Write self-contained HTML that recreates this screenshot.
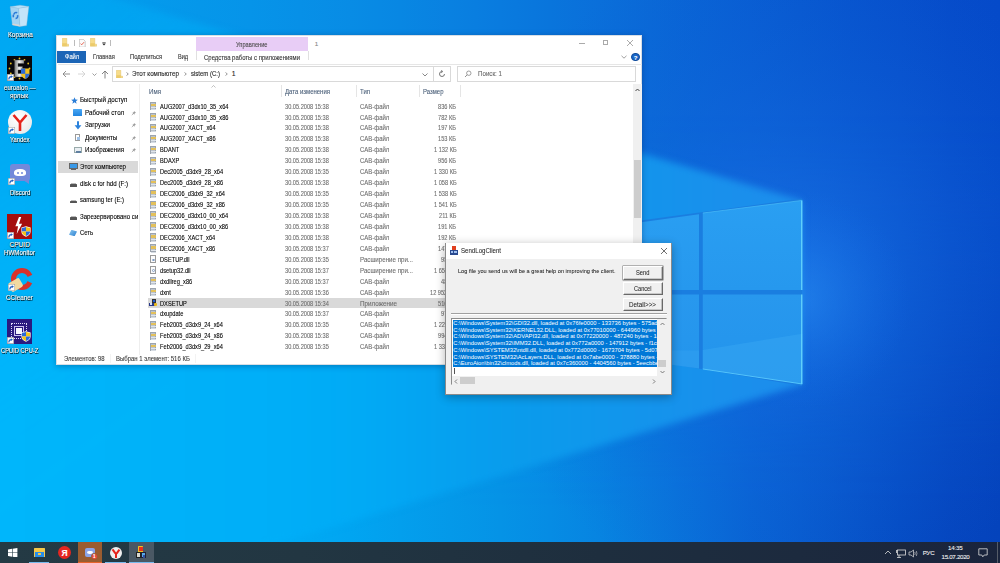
<!DOCTYPE html>
<html><head><meta charset="utf-8"><style>
*{margin:0;padding:0;box-sizing:border-box}
html,body{width:1000px;height:563px;overflow:hidden;position:relative;font-family:"Liberation Sans",sans-serif;background:#0a70d8}
.a{position:absolute;white-space:nowrap}
.ic{position:absolute}
.t{position:absolute;white-space:nowrap;line-height:1;-webkit-text-stroke:0.1px}
.dl{text-shadow:0 0 1px #000,0 0.5px 1px #000}
</style></head><body>

<svg class="a" style="left:0;top:0" width="1000" height="563" viewBox="0 0 1000 563">
<defs>
<linearGradient id="topg" x1="0" y1="0" x2="1000" y2="0" gradientUnits="userSpaceOnUse"><stop offset="0.000" stop-color="rgb(1,162,239)"/><stop offset="0.050" stop-color="rgb(1,160,238)"/><stop offset="0.100" stop-color="rgb(2,157,237)"/><stop offset="0.150" stop-color="rgb(4,154,236)"/><stop offset="0.200" stop-color="rgb(5,151,234)"/><stop offset="0.250" stop-color="rgb(6,148,233)"/><stop offset="0.300" stop-color="rgb(7,144,231)"/><stop offset="0.350" stop-color="rgb(8,140,229)"/><stop offset="0.400" stop-color="rgb(8,135,227)"/><stop offset="0.450" stop-color="rgb(9,129,225)"/><stop offset="0.500" stop-color="rgb(9,123,223)"/><stop offset="0.550" stop-color="rgb(9,117,220)"/><stop offset="0.600" stop-color="rgb(10,111,218)"/><stop offset="0.650" stop-color="rgb(10,105,215)"/><stop offset="0.700" stop-color="rgb(9,99,213)"/><stop offset="0.750" stop-color="rgb(9,94,211)"/><stop offset="0.800" stop-color="rgb(8,89,208)"/><stop offset="0.850" stop-color="rgb(7,84,206)"/><stop offset="0.900" stop-color="rgb(7,80,204)"/><stop offset="0.950" stop-color="rgb(6,76,202)"/><stop offset="1.000" stop-color="rgb(5,74,201)"/></linearGradient>
<linearGradient id="botg" x1="0" y1="0" x2="1000" y2="0" gradientUnits="userSpaceOnUse"><stop offset="0.000" stop-color="rgb(0,179,250)"/><stop offset="0.050" stop-color="rgb(0,179,249)"/><stop offset="0.100" stop-color="rgb(0,177,249)"/><stop offset="0.150" stop-color="rgb(0,176,248)"/><stop offset="0.200" stop-color="rgb(0,175,247)"/><stop offset="0.250" stop-color="rgb(0,173,246)"/><stop offset="0.300" stop-color="rgb(1,170,244)"/><stop offset="0.350" stop-color="rgb(1,165,241)"/><stop offset="0.400" stop-color="rgb(3,159,237)"/><stop offset="0.450" stop-color="rgb(4,153,233)"/><stop offset="0.500" stop-color="rgb(5,147,230)"/><stop offset="0.550" stop-color="rgb(6,140,228)"/><stop offset="0.600" stop-color="rgb(7,132,225)"/><stop offset="0.650" stop-color="rgb(9,122,221)"/><stop offset="0.700" stop-color="rgb(9,111,217)"/><stop offset="0.750" stop-color="rgb(9,100,212)"/><stop offset="0.800" stop-color="rgb(8,92,207)"/><stop offset="0.850" stop-color="rgb(7,84,201)"/><stop offset="0.900" stop-color="rgb(5,76,196)"/><stop offset="0.950" stop-color="rgb(5,70,191)"/><stop offset="1.000" stop-color="rgb(4,67,188)"/></linearGradient>
<linearGradient id="vmask" x1="0" y1="0" x2="0" y2="563" gradientUnits="userSpaceOnUse"><stop offset="0.200" stop-color="#fff" stop-opacity="0.000"/><stop offset="0.270" stop-color="#fff" stop-opacity="0.028"/><stop offset="0.340" stop-color="#fff" stop-opacity="0.104"/><stop offset="0.410" stop-color="#fff" stop-opacity="0.216"/><stop offset="0.480" stop-color="#fff" stop-opacity="0.352"/><stop offset="0.550" stop-color="#fff" stop-opacity="0.500"/><stop offset="0.620" stop-color="#fff" stop-opacity="0.648"/><stop offset="0.690" stop-color="#fff" stop-opacity="0.784"/><stop offset="0.760" stop-color="#fff" stop-opacity="0.896"/><stop offset="0.830" stop-color="#fff" stop-opacity="0.972"/><stop offset="0.900" stop-color="#fff" stop-opacity="1.000"/></linearGradient>
<mask id="m1"><rect width="1000" height="563" fill="url(#vmask)"/></mask>
<linearGradient id="bmaskg" x1="0" y1="0" x2="250" y2="350" gradientUnits="userSpaceOnUse"><stop offset="0.000" stop-color="#fff" stop-opacity="0.300"/><stop offset="0.100" stop-color="#fff" stop-opacity="0.320"/><stop offset="0.200" stop-color="#fff" stop-opacity="0.373"/><stop offset="0.300" stop-color="#fff" stop-opacity="0.451"/><stop offset="0.400" stop-color="#fff" stop-opacity="0.546"/><stop offset="0.500" stop-color="#fff" stop-opacity="0.650"/><stop offset="0.600" stop-color="#fff" stop-opacity="0.754"/><stop offset="0.700" stop-color="#fff" stop-opacity="0.849"/><stop offset="0.800" stop-color="#fff" stop-opacity="0.927"/><stop offset="0.900" stop-color="#fff" stop-opacity="0.980"/><stop offset="1.000" stop-color="#fff" stop-opacity="1.000"/></linearGradient>
<mask id="bmask"><rect x="-300" y="-200" width="1400" height="900" fill="url(#bmaskg)"/></mask>
<linearGradient id="beam" x1="0" y1="0" x2="802" y2="0" gradientUnits="userSpaceOnUse"><stop offset="0.000" stop-color="rgb(0,182,251)"/><stop offset="0.050" stop-color="rgb(0,181,250)"/><stop offset="0.100" stop-color="rgb(0,180,250)"/><stop offset="0.150" stop-color="rgb(0,179,249)"/><stop offset="0.200" stop-color="rgb(0,177,249)"/><stop offset="0.250" stop-color="rgb(0,176,248)"/><stop offset="0.300" stop-color="rgb(0,175,248)"/><stop offset="0.350" stop-color="rgb(0,174,247)"/><stop offset="0.400" stop-color="rgb(0,172,246)"/><stop offset="0.450" stop-color="rgb(1,170,245)"/><stop offset="0.500" stop-color="rgb(3,166,243)"/><stop offset="0.550" stop-color="rgb(5,162,240)"/><stop offset="0.600" stop-color="rgb(7,158,238)"/><stop offset="0.650" stop-color="rgb(10,155,236)"/><stop offset="0.700" stop-color="rgb(13,153,236)"/><stop offset="0.750" stop-color="rgb(16,151,236)"/><stop offset="0.800" stop-color="rgb(19,148,236)"/><stop offset="0.850" stop-color="rgb(22,146,236)"/><stop offset="0.900" stop-color="rgb(25,144,236)"/><stop offset="0.950" stop-color="rgb(27,142,236)"/><stop offset="1.000" stop-color="rgb(29,141,236)"/></linearGradient>
<radialGradient id="glow" cx="790" cy="270" r="330" gradientUnits="userSpaceOnUse">
<stop offset="0" stop-color="rgb(30,120,235)" stop-opacity="0.65"/><stop offset="1" stop-color="rgb(10,90,210)" stop-opacity="0"/>
</radialGradient>
<radialGradient id="glow2" cx="800" cy="300" r="110" gradientUnits="userSpaceOnUse"><stop offset="0" stop-color="rgb(40,140,240)" stop-opacity="0.55"/><stop offset="1" stop-color="rgb(20,110,230)" stop-opacity="0"/></radialGradient>
<linearGradient id="pane" x1="0" y1="200" x2="0" y2="290" gradientUnits="userSpaceOnUse">
<stop offset="0" stop-color="#2a9ff2"/><stop offset="1" stop-color="#2698ee"/>
</linearGradient>
<linearGradient id="pane2" x1="0" y1="294" x2="0" y2="384" gradientUnits="userSpaceOnUse">
<stop offset="0" stop-color="#2898ee"/><stop offset="1" stop-color="#2294ec"/>
</linearGradient>
<filter id="bl" x="-20%" y="-20%" width="140%" height="140%" color-interpolation-filters="sRGB"><feGaussianBlur stdDeviation="3.5"/></filter>
</defs>
<rect width="1000" height="563" fill="url(#topg)"/>
<rect width="1000" height="563" fill="url(#botg)" mask="url(#m1)"/>
<rect width="1000" height="563" fill="url(#glow)"/>
<rect width="1000" height="563" fill="url(#glow2)"/>
<g mask="url(#bmask)"><polygon points="802,200.4 -300,-123 -300,719 802,384.5" fill="url(#beam)" filter="url(#bl)"/></g>
<polygon points="600,226 802,198.5 802,386 600,352" fill="#1a7ee0"/>
<polygon points="600,228 699,214.3 699,290 600,290" fill="url(#pane)"/>
<polygon points="702.8,213 802.3,200.4 802.3,290 702.8,290" fill="url(#pane)"/>
<polygon points="600,294.5 699,294.5 699,368.5 600,355" fill="url(#pane2)"/>
<polygon points="702.8,294.5 802.3,294.5 802.3,384 702.8,369" fill="url(#pane2)"/>
<polygon points="702.8,350 802.3,333.7 802.3,384 702.8,369" fill="#3aa8f4" opacity="0.45"/>
<polygon points="600,350 699,350.5 699,368.5 600,355" fill="#3aa8f4" opacity="0.3"/>
<line x1="801.8" y1="200.6" x2="801.8" y2="290" stroke="#78e4ff" stroke-width="1"/>
<line x1="801.8" y1="294.5" x2="801.8" y2="384" stroke="#78e4ff" stroke-width="1"/>
<line x1="702.8" y1="369" x2="802.3" y2="384" stroke="#60d0ff" stroke-width="0.8"/>
<line x1="702.8" y1="213" x2="802.3" y2="200.4" stroke="#50c4fa" stroke-width="0.6"/>
</svg>

<svg class="a" style="left:9px;top:4px" width="21" height="23" viewBox="0 0 21 23">
<path d="M1.2 2.8L9.5 4.2L11 22.5L3.4 21Z" fill="rgba(190,220,242,0.85)" stroke="rgba(150,185,210,0.9)" stroke-width="0.4"/>
<path d="M9.5 4.2L19.8 2.6L17.6 21.6L11 22.5Z" fill="rgba(215,235,250,0.9)" stroke="rgba(150,185,210,0.9)" stroke-width="0.4"/>
<path d="M1.2 2.8L11 1.2L19.8 2.6L9.5 4.2Z" fill="rgba(225,240,252,0.8)" stroke="rgba(150,185,210,0.9)" stroke-width="0.4"/>
<path d="M3.6 19.5L10.6 20.8L11 22.5L3.4 21Z" fill="rgba(230,215,205,0.8)"/>
<path d="M4.8 10.5Q6 7.6 8.2 8.8M8.6 11.2Q9 14.6 6.6 14.4M4.6 13.2Q3.8 12 4.6 10.8" fill="none" stroke="#2b7bd6" stroke-width="1.6"/>
</svg>
<div class="t" style="left:7.50px;top:32.05px;font-size:6.6px;color:#fff;transform:scaleX(0.9871);transform-origin:0 0;text-shadow:0.5px 0.6px 0.6px rgba(0,0,0,1),0 0 1.4px rgba(0,0,0,0.7);-webkit-text-stroke:0.12px">Корзина</div>
<div class="a" style="left:7px;top:56px;width:25px;height:25px;background:#07070c"></div>
<svg class="a" style="left:7px;top:56px" width="25" height="25" viewBox="0 0 25 25">
<g fill="#e8c020"><circle cx="12.5" cy="2.5" r="0.9"/><circle cx="17.5" cy="3.8" r="0.9"/><circle cx="21.2" cy="7.5" r="0.9"/><circle cx="22.5" cy="12.5" r="0.9"/><circle cx="21.2" cy="17.5" r="0.9"/><circle cx="17.5" cy="21.2" r="0.9"/><circle cx="12.5" cy="22.5" r="0.9"/><circle cx="7.5" cy="21.2" r="0.9"/><circle cx="3.8" cy="17.5" r="0.9"/><circle cx="2.5" cy="12.5" r="0.9"/><circle cx="3.8" cy="7.5" r="0.9"/><circle cx="7.5" cy="3.8" r="0.9"/></g>
<defs><linearGradient id="eg" x1="0" x2="1"><stop offset="0" stop-color="#777"/><stop offset="0.5" stop-color="#f4f4f4"/><stop offset="1" stop-color="#999"/></linearGradient></defs>
<path d="M7.5 4H17V7.5H11V10.5H15.5V14H11V17.5H17V21H7.5Z" fill="url(#eg)" stroke="#444" stroke-width="0.4"/>
<path d="M14 12.5H22.5V17Q22.5 21 18.2 23Q14 21 14 17Z" fill="#f0c020"/>
<path d="M18.25 12.5V23Q14 21 14 17V17.8H22.5V17Q22.5 21 18.25 23" fill="none"/>
<path d="M14 12.5H18.25V17.8H14Z" fill="#2a6ad8"/><path d="M18.25 17.8H22.5V17Q22.5 21 18.25 23Z" fill="#2a6ad8"/>
</svg>
<svg class="a" style="left:7px;top:74px" width="7" height="7" viewBox="0 0 7 7"><rect x="0.25" y="0.25" width="6.5" height="6.5" fill="#fff" stroke="#9a9a9a" stroke-width="0.5"/><path d="M1.8 5.5Q1.8 2.6 4.6 2.6" fill="none" stroke="#1f5fc0" stroke-width="1.1"/><path d="M3.9 1.2L5.9 2.6L3.9 4Z" fill="#1f5fc0"/></svg>
<div class="t" style="left:3.90px;top:84.75px;font-size:6.6px;color:#fff;transform:scaleX(0.9269);transform-origin:0 0;text-shadow:0.5px 0.6px 0.6px rgba(0,0,0,1),0 0 1.4px rgba(0,0,0,0.7);-webkit-text-stroke:0.12px">euroaion —</div>
<div class="t" style="left:10.35px;top:92.55px;font-size:6.6px;color:#fff;transform:scaleX(0.9792);transform-origin:0 0;text-shadow:0.5px 0.6px 0.6px rgba(0,0,0,1),0 0 1.4px rgba(0,0,0,0.7);-webkit-text-stroke:0.12px">ярлык</div>
<div class="a" style="left:8px;top:110px;width:24px;height:24px;border-radius:50%;background:radial-gradient(circle at 40% 35%,#ffffff,#e4e4e4)"></div>
<svg class="a" style="left:8px;top:110px" width="24" height="24" viewBox="0 0 24 24"><path d="M5.5 5L12 12.5L18.5 5M12 12.5V21" fill="none" stroke="#e5231b" stroke-width="2.6" stroke-linejoin="miter"/></svg>
<svg class="a" style="left:8px;top:127px" width="7" height="7" viewBox="0 0 7 7"><rect x="0.25" y="0.25" width="6.5" height="6.5" fill="#fff" stroke="#9a9a9a" stroke-width="0.5"/><path d="M1.8 5.5Q1.8 2.6 4.6 2.6" fill="none" stroke="#1f5fc0" stroke-width="1.1"/><path d="M3.9 1.2L5.9 2.6L3.9 4Z" fill="#1f5fc0"/></svg>
<div class="t" style="left:9.85px;top:137.15px;font-size:6.6px;color:#fff;transform:scaleX(0.8914);transform-origin:0 0;text-shadow:0.5px 0.6px 0.6px rgba(0,0,0,1),0 0 1.4px rgba(0,0,0,0.7);-webkit-text-stroke:0.12px">Yandex</div>
<div class="a" style="left:10px;top:164px;width:19.5px;height:17px;background:#7289da;border-radius:3px">
<div style="position:absolute;left:4px;top:5px;width:11.5px;height:7px;background:#fff;border-radius:45% 45% 35% 35%"></div>
<div style="position:absolute;left:6.5px;top:7.5px;width:2px;height:2px;background:#7289da;border-radius:50%"></div>
<div style="position:absolute;left:11px;top:7.5px;width:2px;height:2px;background:#7289da;border-radius:50%"></div>
</div>
<div class="a" style="left:23px;top:180px;width:6px;height:4px;background:#7289da;clip-path:polygon(0 0,100% 0,100% 100%)"></div>
<svg class="a" style="left:8px;top:178px" width="7" height="7" viewBox="0 0 7 7"><rect x="0.25" y="0.25" width="6.5" height="6.5" fill="#fff" stroke="#9a9a9a" stroke-width="0.5"/><path d="M1.8 5.5Q1.8 2.6 4.6 2.6" fill="none" stroke="#1f5fc0" stroke-width="1.1"/><path d="M3.9 1.2L5.9 2.6L3.9 4Z" fill="#1f5fc0"/></svg>
<div class="t" style="left:9.80px;top:189.55px;font-size:6.6px;color:#fff;transform:scaleX(0.9124);transform-origin:0 0;text-shadow:0.5px 0.6px 0.6px rgba(0,0,0,1),0 0 1.4px rgba(0,0,0,0.7);-webkit-text-stroke:0.12px">Discord</div>
<div class="a" style="left:7px;top:214px;width:25px;height:25px;background:#a50d0d">
<div style="position:absolute;left:7px;top:3px;width:9px;height:17px;background:#fff;clip-path:polygon(55% 0,15% 55%,45% 55%,30% 100%,90% 40%,55% 40%,80% 0)"></div>
<svg style="position:absolute;left:14px;top:12px" width="10" height="11" viewBox="0 0 10 11"><path d="M5 0.3L9.6 1.6V5.5Q9.6 9 5 10.8Q0.4 9 0.4 5.5V1.6Z" fill="#fff"/><path d="M5 1L5 5.4H0.9V2Z" fill="#2a6ad8"/><path d="M5 1L9.1 2V5.4H5Z" fill="#f2c21a"/><path d="M0.9 5.4H5V10.1Q1.2 8.6 0.9 5.4Z" fill="#f2c21a"/><path d="M5 5.4H9.1Q8.8 8.6 5 10.1Z" fill="#2a6ad8"/></svg>
</div>
<svg class="a" style="left:7px;top:232px" width="7" height="7" viewBox="0 0 7 7"><rect x="0.25" y="0.25" width="6.5" height="6.5" fill="#fff" stroke="#9a9a9a" stroke-width="0.5"/><path d="M1.8 5.5Q1.8 2.6 4.6 2.6" fill="none" stroke="#1f5fc0" stroke-width="1.1"/><path d="M3.9 1.2L5.9 2.6L3.9 4Z" fill="#1f5fc0"/></svg>
<div class="t" style="left:9.44px;top:242.45px;font-size:6.6px;color:#fff;text-shadow:0.5px 0.6px 0.6px rgba(0,0,0,1),0 0 1.4px rgba(0,0,0,0.7);-webkit-text-stroke:0.12px">CPUID</div>
<div class="t" style="left:4.20px;top:250.15px;font-size:6.6px;color:#fff;transform:scaleX(0.9398);transform-origin:0 0;text-shadow:0.5px 0.6px 0.6px rgba(0,0,0,1),0 0 1.4px rgba(0,0,0,0.7);-webkit-text-stroke:0.12px">HWMonitor</div>
<div class="a" style="left:11px;top:268px;width:22px;height:22px;border-radius:50%;border:5px solid #d8322a;clip-path:polygon(0 0,100% 0,100% 30%,55% 50%,100% 72%,100% 100%,0 100%)"></div>
<div class="a" style="left:9px;top:280px;width:13px;height:10px;background:#f2d9a0;border-radius:2px;transform:rotate(-30deg)"></div>
<svg class="a" style="left:8px;top:284px" width="7" height="7" viewBox="0 0 7 7"><rect x="0.25" y="0.25" width="6.5" height="6.5" fill="#fff" stroke="#9a9a9a" stroke-width="0.5"/><path d="M1.8 5.5Q1.8 2.6 4.6 2.6" fill="none" stroke="#1f5fc0" stroke-width="1.1"/><path d="M3.9 1.2L5.9 2.6L3.9 4Z" fill="#1f5fc0"/></svg>
<div class="t" style="left:6.20px;top:294.85px;font-size:6.6px;color:#fff;transform:scaleX(0.9692);transform-origin:0 0;text-shadow:0.5px 0.6px 0.6px rgba(0,0,0,1),0 0 1.4px rgba(0,0,0,0.7);-webkit-text-stroke:0.12px">CCleaner</div>
<div class="a" style="left:7px;top:319px;width:25px;height:25px;background:#2a1a80">
<div style="position:absolute;left:4px;top:4px;width:16px;height:16px;border:1.2px dotted #e0dcf8"></div>
<div style="position:absolute;left:7px;top:7px;width:10px;height:10px;border:0.8px solid #c8c0f0"></div>
<div style="position:absolute;left:9px;top:9px;width:6px;height:6px;background:#f4f4ff"></div>
<svg style="position:absolute;left:14px;top:12px" width="10" height="11" viewBox="0 0 10 11"><path d="M5 0.3L9.6 1.6V5.5Q9.6 9 5 10.8Q0.4 9 0.4 5.5V1.6Z" fill="#fff"/><path d="M5 1L5 5.4H0.9V2Z" fill="#2a6ad8"/><path d="M5 1L9.1 2V5.4H5Z" fill="#f2c21a"/><path d="M0.9 5.4H5V10.1Q1.2 8.6 0.9 5.4Z" fill="#f2c21a"/><path d="M5 5.4H9.1Q8.8 8.6 5 10.1Z" fill="#2a6ad8"/></svg></div>
<svg class="a" style="left:7px;top:337px" width="7" height="7" viewBox="0 0 7 7"><rect x="0.25" y="0.25" width="6.5" height="6.5" fill="#fff" stroke="#9a9a9a" stroke-width="0.5"/><path d="M1.8 5.5Q1.8 2.6 4.6 2.6" fill="none" stroke="#1f5fc0" stroke-width="1.1"/><path d="M3.9 1.2L5.9 2.6L3.9 4Z" fill="#1f5fc0"/></svg>
<div class="t" style="left:1.35px;top:347.75px;font-size:6.6px;color:#fff;transform:scaleX(0.8776);transform-origin:0 0;text-shadow:0.5px 0.6px 0.6px rgba(0,0,0,1),0 0 1.4px rgba(0,0,0,0.7);-webkit-text-stroke:0.12px">CPUID CPU-Z</div>
<div class="a" style="left:56.3px;top:35px;width:586px;height:329.9px;background:#fff;border:1px solid rgba(140,160,180,0.35);box-shadow:0 1px 6px rgba(0,30,80,0.35)"></div>
<svg class="a" style="left:62px;top:38.4px" width="7" height="8.5" viewBox="0 0 7 8.5"><path d="M0.3 0.3H4.8V6.2H6.7V8.2H0.3Z" fill="#f7dc8a" stroke="#dcb85a" stroke-width="0.4"/><path d="M0.3 5.2H4.8V8.2H0.3Z" fill="#eccb6a"/></svg>
<div class="a" style="left:73.5px;top:39.5px;width:0.5px;height:6px;background:#bbb"></div>
<svg class="a" style="left:79px;top:38.8px" width="6.5" height="8.5" viewBox="0 0 6.5 8.5"><path d="M0.3 0.3H4.3L6.2 2.2V8.2H0.3Z" fill="#fbfbfb" stroke="#9a9a9a" stroke-width="0.5"/><path d="M1.5 4.6L2.7 5.8L5 3.2" fill="none" stroke="#e0402a" stroke-width="0.8"/></svg>
<svg class="a" style="left:89.6px;top:38.4px" width="7" height="8.5" viewBox="0 0 7 8.5"><path d="M0.3 0.3H4.8V6.2H6.7V8.2H0.3Z" fill="#f7dc8a" stroke="#dcb85a" stroke-width="0.4"/><path d="M0.3 5.2H4.8V8.2H0.3Z" fill="#eccb6a"/></svg>
<svg class="a" style="left:101.5px;top:41.5px" width="4" height="4" viewBox="0 0 4 4"><path d="M0.3 0.4H3.7" stroke="#222" stroke-width="0.6"/><path d="M0.2 1.4H3.8L2 3.6Z" fill="#222"/></svg>
<div class="a" style="left:109.5px;top:39.5px;width:0.5px;height:6px;background:#bbb"></div>
<div class="a" style="left:196.4px;top:36.5px;width:111.6px;height:14.2px;background:#e8cdf6"></div>
<div class="t" style="left:236.45px;top:41.55px;font-size:6.6px;color:#4a4a4a;transform:scaleX(0.8593);transform-origin:0 0">Управление</div>
<div class="t" style="left:314.80px;top:40.55px;font-size:6.2px;color:#888">1</div>
<div class="a" style="left:578.5px;top:42.5px;width:6px;height:0.7px;background:#aaa"></div>
<div class="a" style="left:602.8px;top:39.8px;width:5.4px;height:5.4px;border:0.7px solid #aaa"></div>
<svg class="a" style="left:625.5px;top:39px" width="8" height="8" viewBox="0 0 8 8"><path d="M1 1L7 7M7 1L1 7" stroke="#888" stroke-width="0.7"/></svg>
<div class="a" style="left:57px;top:51px;width:29px;height:12.2px;background:#1c65b6"></div>
<div class="t" style="left:64.60px;top:54.45px;font-size:6.6px;color:#fff;transform:scaleX(0.8755);transform-origin:0 0">Файл</div>
<div class="t" style="left:93.20px;top:54.45px;font-size:6.6px;color:#333;transform:scaleX(0.8682);transform-origin:0 0">Главная</div>
<div class="t" style="left:130.00px;top:54.45px;font-size:6.6px;color:#333;transform:scaleX(0.8841);transform-origin:0 0">Поделиться</div>
<div class="t" style="left:177.60px;top:54.45px;font-size:6.6px;color:#333;transform:scaleX(0.8461);transform-origin:0 0">Вид</div>
<div class="t" style="left:204.00px;top:54.55px;font-size:6.6px;color:#333;transform:scaleX(0.9054);transform-origin:0 0">Средства работы с приложениями</div>
<div class="a" style="left:196.2px;top:51px;width:0.5px;height:9px;background:#e0e0e0"></div>
<div class="a" style="left:307.8px;top:51px;width:0.5px;height:9px;background:#e0e0e0"></div>
<svg class="a" style="left:621px;top:55px" width="6" height="4" viewBox="0 0 6 4"><path d="M0.5 0.8L3 3.2L5.5 0.8" fill="none" stroke="#777" stroke-width="0.7"/></svg>
<div class="a" style="left:631.3px;top:52.8px;width:8.6px;height:8.6px;border-radius:50%;background:#1c68c8;border:0.5px solid #0f4a9a"></div>
<div class="t" style="left:633.76px;top:54.65px;font-size:6px;color:#fff;font-weight:bold">?</div>
<div class="a" style="left:57.5px;top:64.3px;width:584px;height:0.6px;background:#e6e6e6"></div>
<svg class="a" style="left:62px;top:70px" width="9" height="8" viewBox="0 0 9 8"><path d="M8 4H1.2M4 1L1 4L4 7" fill="none" stroke="#777" stroke-width="0.8"/></svg>
<svg class="a" style="left:77px;top:70px" width="9" height="8" viewBox="0 0 9 8"><path d="M1 4H7.8M5 1L8 4L5 7" fill="none" stroke="#ccc" stroke-width="0.8"/></svg>
<svg class="a" style="left:92px;top:72.5px" width="5" height="3" viewBox="0 0 5 3"><path d="M0.5 0.5L2.5 2.5L4.5 0.5" fill="none" stroke="#777" stroke-width="0.7"/></svg>
<svg class="a" style="left:101px;top:69.5px" width="8" height="9" viewBox="0 0 8 9"><path d="M4 8.5V1.2M1 4L4 1L7 4" fill="none" stroke="#666" stroke-width="0.8"/></svg>
<div class="a" style="left:112.3px;top:66.3px;width:338.5px;height:15.4px;border:0.6px solid #d9d9d9"></div>
<div class="a" style="left:432.8px;top:66.3px;width:0.6px;height:15.4px;background:#d9d9d9"></div>
<svg class="a" style="left:115.5px;top:69.8px" width="7" height="8.5" viewBox="0 0 7 8.5"><path d="M0.3 0.3H4.8V6.2H6.7V8.2H0.3Z" fill="#f7dc8a" stroke="#dcb85a" stroke-width="0.4"/><path d="M0.3 5.2H4.8V8.2H0.3Z" fill="#eccb6a"/></svg>
<svg class="a" style="left:125.6px;top:72px" width="3" height="4" viewBox="0 0 3 4"><path d="M0.5 0.5L2.3 2L0.5 3.5" fill="none" stroke="#555" stroke-width="0.6"/></svg>
<svg class="a" style="left:184.2px;top:72px" width="3" height="4" viewBox="0 0 3 4"><path d="M0.5 0.5L2.3 2L0.5 3.5" fill="none" stroke="#555" stroke-width="0.6"/></svg>
<svg class="a" style="left:225.3px;top:72px" width="3" height="4" viewBox="0 0 3 4"><path d="M0.5 0.5L2.3 2L0.5 3.5" fill="none" stroke="#555" stroke-width="0.6"/></svg>
<div class="t" style="left:132.00px;top:70.85px;font-size:6.8px;color:#1e1e1e;transform:scaleX(0.9247);transform-origin:0 0">Этот компьютер</div>
<div class="t" style="left:191.00px;top:70.85px;font-size:6.8px;color:#1e1e1e;transform:scaleX(0.8825);transform-origin:0 0">sistem (C:)</div>
<div class="t" style="left:231.80px;top:70.85px;font-size:6.8px;color:#1e1e1e">1</div>
<svg class="a" style="left:422px;top:72.5px" width="6" height="4" viewBox="0 0 6 4"><path d="M0.5 0.5L3 3L5.5 0.5" fill="none" stroke="#555" stroke-width="0.7"/></svg>
<svg class="a" style="left:437.5px;top:70px" width="8" height="8" viewBox="0 0 8 8"><path d="M6.5 4A2.5 2.5 0 1 1 4 1.5" fill="none" stroke="#555" stroke-width="0.8"/><path d="M3.2 0.3L4.8 1.5L3.2 2.8" fill="none" stroke="#555" stroke-width="0.7"/></svg>
<div class="a" style="left:457px;top:66.3px;width:178.5px;height:15.4px;border:0.6px solid #d9d9d9"></div>
<svg class="a" style="left:464px;top:70px" width="8" height="8" viewBox="0 0 8 8"><circle cx="4.8" cy="3.2" r="2.2" fill="none" stroke="#777" stroke-width="0.7"/><path d="M3.2 4.8L1 7" stroke="#777" stroke-width="0.8"/></svg>
<div class="t" style="left:478.00px;top:70.95px;font-size:6.6px;color:#6a6a6a;transform:scaleX(0.9372);transform-origin:0 0">Поиск: 1</div>
<div class="a" style="left:57.5px;top:161px;width:80.5px;height:11.5px;background:#d9d9d9"></div>
<svg class="a" style="left:70.5px;top:96.5px" width="7" height="7" viewBox="0 0 10 10"><path d="M5 0.3L6.3 3.6L9.8 3.8L7.1 6L8 9.5L5 7.6L2 9.5L2.9 6L0.2 3.8L3.7 3.6Z" fill="#2a7ed8"/></svg>
<div class="t" style="left:79.70px;top:97.05px;font-size:6.8px;color:#000;transform:scaleX(0.9162);transform-origin:0 0">Быстрый доступ</div>
<div class="a" style="left:73.2px;top:109.3px;width:8.8px;height:6.6px;background:linear-gradient(#4aa8f4,#1f84e0);border-radius:0.6px"></div>
<svg class="a" style="left:131px;top:109.7px" width="6" height="6" viewBox="0 0 6 6"><path d="M0.8 5.2L2.6 3.4" stroke="#8a8a8a" stroke-width="0.6"/><path d="M2 2.6L3.4 1.2L4.8 2.6L3.4 4Z" fill="#9a9a9a"/><path d="M1.6 2.8L3.2 4.4" stroke="#8a8a8a" stroke-width="0.8"/></svg>
<div class="t" style="left:84.70px;top:109.75px;font-size:6.8px;color:#000;transform:scaleX(0.9163);transform-origin:0 0">Рабочий стол</div>
<svg class="a" style="left:73.5px;top:120.7px" width="8" height="9" viewBox="0 0 8 9"><path d="M4 0.3V5" stroke="#2a82dc" stroke-width="2"/><path d="M0.6 4.2H7.4L4 8.6Z" fill="#2a82dc"/></svg>
<svg class="a" style="left:131px;top:122.2px" width="6" height="6" viewBox="0 0 6 6"><path d="M0.8 5.2L2.6 3.4" stroke="#8a8a8a" stroke-width="0.6"/><path d="M2 2.6L3.4 1.2L4.8 2.6L3.4 4Z" fill="#9a9a9a"/><path d="M1.6 2.8L3.2 4.4" stroke="#8a8a8a" stroke-width="0.8"/></svg>
<div class="t" style="left:84.70px;top:122.25px;font-size:6.8px;color:#000;transform:scaleX(0.9174);transform-origin:0 0">Загрузки</div>
<div class="a" style="left:74.5px;top:133.8px;width:5.5px;height:7.5px;background:#fff;border:0.6px solid #999"><div style="position:absolute;left:1px;top:2px;width:3px;height:3px;background:#9cc0e8"></div></div>
<svg class="a" style="left:131px;top:134.8px" width="6" height="6" viewBox="0 0 6 6"><path d="M0.8 5.2L2.6 3.4" stroke="#8a8a8a" stroke-width="0.6"/><path d="M2 2.6L3.4 1.2L4.8 2.6L3.4 4Z" fill="#9a9a9a"/><path d="M1.6 2.8L3.2 4.4" stroke="#8a8a8a" stroke-width="0.8"/></svg>
<div class="t" style="left:84.70px;top:134.85px;font-size:6.8px;color:#000;transform:scaleX(0.9216);transform-origin:0 0">Документы</div>
<div class="a" style="left:73.5px;top:147.3px;width:8px;height:5.8px;background:#e9eef2;border:0.6px solid #9aa"><div style="position:absolute;left:1px;top:2.5px;width:5px;height:1.8px;background:#6080a0"></div></div>
<svg class="a" style="left:131px;top:147.3px" width="6" height="6" viewBox="0 0 6 6"><path d="M0.8 5.2L2.6 3.4" stroke="#8a8a8a" stroke-width="0.6"/><path d="M2 2.6L3.4 1.2L4.8 2.6L3.4 4Z" fill="#9a9a9a"/><path d="M1.6 2.8L3.2 4.4" stroke="#8a8a8a" stroke-width="0.8"/></svg>
<div class="t" style="left:84.70px;top:147.35px;font-size:6.8px;color:#000;transform:scaleX(0.9153);transform-origin:0 0">Изображения</div>
<div class="a" style="left:68.8px;top:163.1px;width:8.8px;height:6px;background:#3a9ae8;border:0.5px solid #666"></div><div class="a" style="left:71px;top:169.29999999999998px;width:4.5px;height:0.8px;background:#666"></div>
<div class="t" style="left:80.00px;top:163.75px;font-size:6.8px;color:#000;transform:scaleX(0.9050);transform-origin:0 0">Этот компьютер</div>
<div class="a" style="left:70px;top:184.0px;width:6.5px;height:2.6px;background:#555;border-radius:0.5px"></div><div class="a" style="left:70.5px;top:183.0px;width:5.5px;height:1px;background:#bbb"></div>
<div class="t" style="left:80.00px;top:180.85px;font-size:6.8px;color:#000;transform:scaleX(0.9075);transform-origin:0 0">disk c for hdd (F:)</div>
<div class="a" style="left:70px;top:200.5px;width:6.5px;height:2.6px;background:#555;border-radius:0.5px"></div><div class="a" style="left:70.5px;top:199.5px;width:5.5px;height:1px;background:#bbb"></div>
<div class="t" style="left:80.00px;top:197.35px;font-size:6.8px;color:#000;transform:scaleX(0.8756);transform-origin:0 0">samsung ter (E:)</div>
<div class="a" style="left:70px;top:217.2px;width:6.5px;height:2.6px;background:#555;border-radius:0.5px"></div><div class="a" style="left:70.5px;top:216.2px;width:5.5px;height:1px;background:#bbb"></div>
<div class="t" style="left:80.00px;top:214.05px;font-size:6.8px;color:#000;transform:scaleX(0.9000);transform-origin:0 0">Зарезервировано си</div>
<div class="a" style="left:69px;top:229.8px;width:8px;height:6.5px;background:linear-gradient(135deg,#8cc8f0,#2a80d0);clip-path:polygon(30% 0,100% 25%,70% 100%,0 75%)"></div>
<div class="t" style="left:80.00px;top:230.35px;font-size:6.8px;color:#000;transform:scaleX(0.8595);transform-origin:0 0">Сеть</div>
<div class="a" style="left:138.2px;top:211px;width:9px;height:12px;background:#fff"></div>
<div class="a" style="left:139.2px;top:84px;width:0.5px;height:271px;background:#eeeeee"></div>
<div class="t" style="left:149.00px;top:89.45px;font-size:6.8px;color:#4c607a;transform:scaleX(0.9057);transform-origin:0 0">Имя</div>
<svg class="a" style="left:211px;top:85.3px" width="5" height="3" viewBox="0 0 5 3"><path d="M0.5 2.5L2.5 0.5L4.5 2.5" fill="none" stroke="#999" stroke-width="0.6"/></svg>
<div class="a" style="left:281.3px;top:85px;width:0.5px;height:12px;background:#e5e5e5"></div>
<div class="a" style="left:356.2px;top:85px;width:0.5px;height:12px;background:#e5e5e5"></div>
<div class="a" style="left:418.8px;top:85px;width:0.5px;height:12px;background:#e5e5e5"></div>
<div class="a" style="left:460px;top:85px;width:0.5px;height:12px;background:#e5e5e5"></div>
<div class="t" style="left:285.00px;top:89.45px;font-size:6.8px;color:#4c607a;transform:scaleX(0.8810);transform-origin:0 0">Дата изменения</div>
<div class="t" style="left:360.00px;top:89.45px;font-size:6.8px;color:#4c607a;transform:scaleX(0.8815);transform-origin:0 0">Тип</div>
<div class="t" style="left:422.50px;top:89.45px;font-size:6.8px;color:#4c607a;transform:scaleX(0.8770);transform-origin:0 0">Размер</div>
<div class="ic" style="left:150px;top:102.05px;width:6.2px;height:8.2px;background:#bcc3cc;border:0.5px solid #9ca4ae"><div style="position:absolute;left:0.4px;top:0.9px;width:4.9px;height:2.4px;background:#e3c05a"></div><div style="position:absolute;left:0.4px;top:4.3px;width:4.9px;height:0.8px;background:#dfe4ea"></div><div style="position:absolute;left:0.4px;top:6.4px;width:4.9px;height:0.6px;background:#d6dce3"></div></div>
<div class="t" style="left:160.00px;top:102.60px;font-size:7.0px;color:#000;transform:scaleX(0.8110);transform-origin:0 0">AUG2007_d3dx10_35_x64</div>
<div class="t" style="left:285.00px;top:102.60px;font-size:7.0px;color:#6d6d6d;transform:scaleX(0.8037);transform-origin:0 0">30.05.2008 15:38</div>
<div class="t" style="left:360.00px;top:102.60px;font-size:7.0px;color:#6d6d6d;transform:scaleX(0.8524);transform-origin:0 0">CAB-файл</div>
<div class="t" style="left:438.33px;top:102.60px;font-size:7.0px;color:#6d6d6d;transform:scaleX(0.8060);transform-origin:0 0">836 КБ</div>
<div class="ic" style="left:150px;top:112.99px;width:6.2px;height:8.2px;background:#bcc3cc;border:0.5px solid #9ca4ae"><div style="position:absolute;left:0.4px;top:0.9px;width:4.9px;height:2.4px;background:#e3c05a"></div><div style="position:absolute;left:0.4px;top:4.3px;width:4.9px;height:0.8px;background:#dfe4ea"></div><div style="position:absolute;left:0.4px;top:6.4px;width:4.9px;height:0.6px;background:#d6dce3"></div></div>
<div class="t" style="left:160.00px;top:113.54px;font-size:7.0px;color:#000;transform:scaleX(0.8110);transform-origin:0 0">AUG2007_d3dx10_35_x86</div>
<div class="t" style="left:285.00px;top:113.54px;font-size:7.0px;color:#6d6d6d;transform:scaleX(0.8037);transform-origin:0 0">30.05.2008 15:38</div>
<div class="t" style="left:360.00px;top:113.54px;font-size:7.0px;color:#6d6d6d;transform:scaleX(0.8524);transform-origin:0 0">CAB-файл</div>
<div class="t" style="left:438.33px;top:113.54px;font-size:7.0px;color:#6d6d6d;transform:scaleX(0.8060);transform-origin:0 0">782 КБ</div>
<div class="ic" style="left:150px;top:123.93px;width:6.2px;height:8.2px;background:#bcc3cc;border:0.5px solid #9ca4ae"><div style="position:absolute;left:0.4px;top:0.9px;width:4.9px;height:2.4px;background:#e3c05a"></div><div style="position:absolute;left:0.4px;top:4.3px;width:4.9px;height:0.8px;background:#dfe4ea"></div><div style="position:absolute;left:0.4px;top:6.4px;width:4.9px;height:0.6px;background:#d6dce3"></div></div>
<div class="t" style="left:160.00px;top:124.48px;font-size:7.0px;color:#000;transform:scaleX(0.8110);transform-origin:0 0">AUG2007_XACT_x64</div>
<div class="t" style="left:285.00px;top:124.48px;font-size:7.0px;color:#6d6d6d;transform:scaleX(0.8037);transform-origin:0 0">30.05.2008 15:38</div>
<div class="t" style="left:360.00px;top:124.48px;font-size:7.0px;color:#6d6d6d;transform:scaleX(0.8524);transform-origin:0 0">CAB-файл</div>
<div class="t" style="left:438.33px;top:124.48px;font-size:7.0px;color:#6d6d6d;transform:scaleX(0.8060);transform-origin:0 0">197 КБ</div>
<div class="ic" style="left:150px;top:134.87px;width:6.2px;height:8.2px;background:#bcc3cc;border:0.5px solid #9ca4ae"><div style="position:absolute;left:0.4px;top:0.9px;width:4.9px;height:2.4px;background:#e3c05a"></div><div style="position:absolute;left:0.4px;top:4.3px;width:4.9px;height:0.8px;background:#dfe4ea"></div><div style="position:absolute;left:0.4px;top:6.4px;width:4.9px;height:0.6px;background:#d6dce3"></div></div>
<div class="t" style="left:160.00px;top:135.42px;font-size:7.0px;color:#000;transform:scaleX(0.8110);transform-origin:0 0">AUG2007_XACT_x86</div>
<div class="t" style="left:285.00px;top:135.42px;font-size:7.0px;color:#6d6d6d;transform:scaleX(0.8037);transform-origin:0 0">30.05.2008 15:38</div>
<div class="t" style="left:360.00px;top:135.42px;font-size:7.0px;color:#6d6d6d;transform:scaleX(0.8524);transform-origin:0 0">CAB-файл</div>
<div class="t" style="left:438.33px;top:135.42px;font-size:7.0px;color:#6d6d6d;transform:scaleX(0.8060);transform-origin:0 0">153 КБ</div>
<div class="ic" style="left:150px;top:145.81px;width:6.2px;height:8.2px;background:#bcc3cc;border:0.5px solid #9ca4ae"><div style="position:absolute;left:0.4px;top:0.9px;width:4.9px;height:2.4px;background:#e3c05a"></div><div style="position:absolute;left:0.4px;top:4.3px;width:4.9px;height:0.8px;background:#dfe4ea"></div><div style="position:absolute;left:0.4px;top:6.4px;width:4.9px;height:0.6px;background:#d6dce3"></div></div>
<div class="t" style="left:160.00px;top:146.36px;font-size:7.0px;color:#000;transform:scaleX(0.8110);transform-origin:0 0">BDANT</div>
<div class="t" style="left:285.00px;top:146.36px;font-size:7.0px;color:#6d6d6d;transform:scaleX(0.8037);transform-origin:0 0">30.05.2008 15:38</div>
<div class="t" style="left:360.00px;top:146.36px;font-size:7.0px;color:#6d6d6d;transform:scaleX(0.8524);transform-origin:0 0">CAB-файл</div>
<div class="t" style="left:433.62px;top:146.36px;font-size:7.0px;color:#6d6d6d;transform:scaleX(0.8060);transform-origin:0 0">1 132 КБ</div>
<div class="ic" style="left:150px;top:156.75px;width:6.2px;height:8.2px;background:#bcc3cc;border:0.5px solid #9ca4ae"><div style="position:absolute;left:0.4px;top:0.9px;width:4.9px;height:2.4px;background:#e3c05a"></div><div style="position:absolute;left:0.4px;top:4.3px;width:4.9px;height:0.8px;background:#dfe4ea"></div><div style="position:absolute;left:0.4px;top:6.4px;width:4.9px;height:0.6px;background:#d6dce3"></div></div>
<div class="t" style="left:160.00px;top:157.30px;font-size:7.0px;color:#000;transform:scaleX(0.8110);transform-origin:0 0">BDAXP</div>
<div class="t" style="left:285.00px;top:157.30px;font-size:7.0px;color:#6d6d6d;transform:scaleX(0.8037);transform-origin:0 0">30.05.2008 15:38</div>
<div class="t" style="left:360.00px;top:157.30px;font-size:7.0px;color:#6d6d6d;transform:scaleX(0.8524);transform-origin:0 0">CAB-файл</div>
<div class="t" style="left:438.33px;top:157.30px;font-size:7.0px;color:#6d6d6d;transform:scaleX(0.8060);transform-origin:0 0">956 КБ</div>
<div class="ic" style="left:150px;top:167.69px;width:6.2px;height:8.2px;background:#bcc3cc;border:0.5px solid #9ca4ae"><div style="position:absolute;left:0.4px;top:0.9px;width:4.9px;height:2.4px;background:#e3c05a"></div><div style="position:absolute;left:0.4px;top:4.3px;width:4.9px;height:0.8px;background:#dfe4ea"></div><div style="position:absolute;left:0.4px;top:6.4px;width:4.9px;height:0.6px;background:#d6dce3"></div></div>
<div class="t" style="left:160.00px;top:168.24px;font-size:7.0px;color:#000;transform:scaleX(0.8110);transform-origin:0 0">Dec2005_d3dx9_28_x64</div>
<div class="t" style="left:285.00px;top:168.24px;font-size:7.0px;color:#6d6d6d;transform:scaleX(0.8037);transform-origin:0 0">30.05.2008 15:35</div>
<div class="t" style="left:360.00px;top:168.24px;font-size:7.0px;color:#6d6d6d;transform:scaleX(0.8524);transform-origin:0 0">CAB-файл</div>
<div class="t" style="left:433.62px;top:168.24px;font-size:7.0px;color:#6d6d6d;transform:scaleX(0.8060);transform-origin:0 0">1 330 КБ</div>
<div class="ic" style="left:150px;top:178.63px;width:6.2px;height:8.2px;background:#bcc3cc;border:0.5px solid #9ca4ae"><div style="position:absolute;left:0.4px;top:0.9px;width:4.9px;height:2.4px;background:#e3c05a"></div><div style="position:absolute;left:0.4px;top:4.3px;width:4.9px;height:0.8px;background:#dfe4ea"></div><div style="position:absolute;left:0.4px;top:6.4px;width:4.9px;height:0.6px;background:#d6dce3"></div></div>
<div class="t" style="left:160.00px;top:179.18px;font-size:7.0px;color:#000;transform:scaleX(0.8110);transform-origin:0 0">Dec2005_d3dx9_28_x86</div>
<div class="t" style="left:285.00px;top:179.18px;font-size:7.0px;color:#6d6d6d;transform:scaleX(0.8037);transform-origin:0 0">30.05.2008 15:38</div>
<div class="t" style="left:360.00px;top:179.18px;font-size:7.0px;color:#6d6d6d;transform:scaleX(0.8524);transform-origin:0 0">CAB-файл</div>
<div class="t" style="left:433.62px;top:179.18px;font-size:7.0px;color:#6d6d6d;transform:scaleX(0.8060);transform-origin:0 0">1 058 КБ</div>
<div class="ic" style="left:150px;top:189.57px;width:6.2px;height:8.2px;background:#bcc3cc;border:0.5px solid #9ca4ae"><div style="position:absolute;left:0.4px;top:0.9px;width:4.9px;height:2.4px;background:#e3c05a"></div><div style="position:absolute;left:0.4px;top:4.3px;width:4.9px;height:0.8px;background:#dfe4ea"></div><div style="position:absolute;left:0.4px;top:6.4px;width:4.9px;height:0.6px;background:#d6dce3"></div></div>
<div class="t" style="left:160.00px;top:190.12px;font-size:7.0px;color:#000;transform:scaleX(0.8110);transform-origin:0 0">DEC2006_d3dx9_32_x64</div>
<div class="t" style="left:285.00px;top:190.12px;font-size:7.0px;color:#6d6d6d;transform:scaleX(0.8037);transform-origin:0 0">30.05.2008 15:35</div>
<div class="t" style="left:360.00px;top:190.12px;font-size:7.0px;color:#6d6d6d;transform:scaleX(0.8524);transform-origin:0 0">CAB-файл</div>
<div class="t" style="left:433.62px;top:190.12px;font-size:7.0px;color:#6d6d6d;transform:scaleX(0.8060);transform-origin:0 0">1 538 КБ</div>
<div class="ic" style="left:150px;top:200.51px;width:6.2px;height:8.2px;background:#bcc3cc;border:0.5px solid #9ca4ae"><div style="position:absolute;left:0.4px;top:0.9px;width:4.9px;height:2.4px;background:#e3c05a"></div><div style="position:absolute;left:0.4px;top:4.3px;width:4.9px;height:0.8px;background:#dfe4ea"></div><div style="position:absolute;left:0.4px;top:6.4px;width:4.9px;height:0.6px;background:#d6dce3"></div></div>
<div class="t" style="left:160.00px;top:201.06px;font-size:7.0px;color:#000;transform:scaleX(0.8110);transform-origin:0 0">DEC2006_d3dx9_32_x86</div>
<div class="t" style="left:285.00px;top:201.06px;font-size:7.0px;color:#6d6d6d;transform:scaleX(0.8037);transform-origin:0 0">30.05.2008 15:35</div>
<div class="t" style="left:360.00px;top:201.06px;font-size:7.0px;color:#6d6d6d;transform:scaleX(0.8524);transform-origin:0 0">CAB-файл</div>
<div class="t" style="left:433.62px;top:201.06px;font-size:7.0px;color:#6d6d6d;transform:scaleX(0.8060);transform-origin:0 0">1 541 КБ</div>
<div class="ic" style="left:150px;top:211.45px;width:6.2px;height:8.2px;background:#bcc3cc;border:0.5px solid #9ca4ae"><div style="position:absolute;left:0.4px;top:0.9px;width:4.9px;height:2.4px;background:#e3c05a"></div><div style="position:absolute;left:0.4px;top:4.3px;width:4.9px;height:0.8px;background:#dfe4ea"></div><div style="position:absolute;left:0.4px;top:6.4px;width:4.9px;height:0.6px;background:#d6dce3"></div></div>
<div class="t" style="left:160.00px;top:212.00px;font-size:7.0px;color:#000;transform:scaleX(0.8110);transform-origin:0 0">DEC2006_d3dx10_00_x64</div>
<div class="t" style="left:285.00px;top:212.00px;font-size:7.0px;color:#6d6d6d;transform:scaleX(0.8037);transform-origin:0 0">30.05.2008 15:38</div>
<div class="t" style="left:360.00px;top:212.00px;font-size:7.0px;color:#6d6d6d;transform:scaleX(0.8524);transform-origin:0 0">CAB-файл</div>
<div class="t" style="left:438.74px;top:212.00px;font-size:7.0px;color:#6d6d6d;transform:scaleX(0.8060);transform-origin:0 0">211 КБ</div>
<div class="ic" style="left:150px;top:222.39px;width:6.2px;height:8.2px;background:#bcc3cc;border:0.5px solid #9ca4ae"><div style="position:absolute;left:0.4px;top:0.9px;width:4.9px;height:2.4px;background:#e3c05a"></div><div style="position:absolute;left:0.4px;top:4.3px;width:4.9px;height:0.8px;background:#dfe4ea"></div><div style="position:absolute;left:0.4px;top:6.4px;width:4.9px;height:0.6px;background:#d6dce3"></div></div>
<div class="t" style="left:160.00px;top:222.94px;font-size:7.0px;color:#000;transform:scaleX(0.8110);transform-origin:0 0">DEC2006_d3dx10_00_x86</div>
<div class="t" style="left:285.00px;top:222.94px;font-size:7.0px;color:#6d6d6d;transform:scaleX(0.8037);transform-origin:0 0">30.05.2008 15:38</div>
<div class="t" style="left:360.00px;top:222.94px;font-size:7.0px;color:#6d6d6d;transform:scaleX(0.8524);transform-origin:0 0">CAB-файл</div>
<div class="t" style="left:438.33px;top:222.94px;font-size:7.0px;color:#6d6d6d;transform:scaleX(0.8060);transform-origin:0 0">191 КБ</div>
<div class="ic" style="left:150px;top:233.33px;width:6.2px;height:8.2px;background:#bcc3cc;border:0.5px solid #9ca4ae"><div style="position:absolute;left:0.4px;top:0.9px;width:4.9px;height:2.4px;background:#e3c05a"></div><div style="position:absolute;left:0.4px;top:4.3px;width:4.9px;height:0.8px;background:#dfe4ea"></div><div style="position:absolute;left:0.4px;top:6.4px;width:4.9px;height:0.6px;background:#d6dce3"></div></div>
<div class="t" style="left:160.00px;top:233.88px;font-size:7.0px;color:#000;transform:scaleX(0.8110);transform-origin:0 0">DEC2006_XACT_x64</div>
<div class="t" style="left:285.00px;top:233.88px;font-size:7.0px;color:#6d6d6d;transform:scaleX(0.8037);transform-origin:0 0">30.05.2008 15:38</div>
<div class="t" style="left:360.00px;top:233.88px;font-size:7.0px;color:#6d6d6d;transform:scaleX(0.8524);transform-origin:0 0">CAB-файл</div>
<div class="t" style="left:438.33px;top:233.88px;font-size:7.0px;color:#6d6d6d;transform:scaleX(0.8060);transform-origin:0 0">192 КБ</div>
<div class="ic" style="left:150px;top:244.27px;width:6.2px;height:8.2px;background:#bcc3cc;border:0.5px solid #9ca4ae"><div style="position:absolute;left:0.4px;top:0.9px;width:4.9px;height:2.4px;background:#e3c05a"></div><div style="position:absolute;left:0.4px;top:4.3px;width:4.9px;height:0.8px;background:#dfe4ea"></div><div style="position:absolute;left:0.4px;top:6.4px;width:4.9px;height:0.6px;background:#d6dce3"></div></div>
<div class="t" style="left:160.00px;top:244.82px;font-size:7.0px;color:#000;transform:scaleX(0.8110);transform-origin:0 0">DEC2006_XACT_x86</div>
<div class="t" style="left:285.00px;top:244.82px;font-size:7.0px;color:#6d6d6d;transform:scaleX(0.8037);transform-origin:0 0">30.05.2008 15:37</div>
<div class="t" style="left:360.00px;top:244.82px;font-size:7.0px;color:#6d6d6d;transform:scaleX(0.8524);transform-origin:0 0">CAB-файл</div>
<div class="t" style="left:438.33px;top:244.82px;font-size:7.0px;color:#6d6d6d;transform:scaleX(0.8060);transform-origin:0 0">147 КБ</div>
<div class="ic" style="left:150px;top:255.21px;width:6px;height:7.6px;background:#fbfbfb;border:0.6px solid #9a9a9a"><div style="position:absolute;left:1.2px;top:2.3px;width:2.8px;height:2.8px;border-radius:50%;border:0.7px solid #7f9cc4"></div></div>
<div class="t" style="left:160.00px;top:255.76px;font-size:7.0px;color:#000;transform:scaleX(0.8110);transform-origin:0 0">DSETUP.dll</div>
<div class="t" style="left:285.00px;top:255.76px;font-size:7.0px;color:#6d6d6d;transform:scaleX(0.8037);transform-origin:0 0">30.05.2008 15:35</div>
<div class="t" style="left:360.00px;top:255.76px;font-size:7.0px;color:#6d6d6d;transform:scaleX(0.8806);transform-origin:0 0">Расширение при...</div>
<div class="t" style="left:441.46px;top:255.76px;font-size:7.0px;color:#6d6d6d;transform:scaleX(0.8060);transform-origin:0 0">95 КБ</div>
<div class="ic" style="left:150px;top:266.15px;width:6px;height:7.6px;background:#fbfbfb;border:0.6px solid #9a9a9a"><div style="position:absolute;left:1.2px;top:2.3px;width:2.8px;height:2.8px;border-radius:50%;border:0.7px solid #7f9cc4"></div></div>
<div class="t" style="left:160.00px;top:266.70px;font-size:7.0px;color:#000;transform:scaleX(0.8110);transform-origin:0 0">dsetup32.dll</div>
<div class="t" style="left:285.00px;top:266.70px;font-size:7.0px;color:#6d6d6d;transform:scaleX(0.8037);transform-origin:0 0">30.05.2008 15:37</div>
<div class="t" style="left:360.00px;top:266.70px;font-size:7.0px;color:#6d6d6d;transform:scaleX(0.8806);transform-origin:0 0">Расширение при...</div>
<div class="t" style="left:433.62px;top:266.70px;font-size:7.0px;color:#6d6d6d;transform:scaleX(0.8060);transform-origin:0 0">1 652 КБ</div>
<div class="ic" style="left:150px;top:277.09px;width:6.2px;height:8.2px;background:#bcc3cc;border:0.5px solid #9ca4ae"><div style="position:absolute;left:0.4px;top:0.9px;width:4.9px;height:2.4px;background:#e3c05a"></div><div style="position:absolute;left:0.4px;top:4.3px;width:4.9px;height:0.8px;background:#dfe4ea"></div><div style="position:absolute;left:0.4px;top:6.4px;width:4.9px;height:0.6px;background:#d6dce3"></div></div>
<div class="t" style="left:160.00px;top:277.64px;font-size:7.0px;color:#000;transform:scaleX(0.8110);transform-origin:0 0">dxdllreg_x86</div>
<div class="t" style="left:285.00px;top:277.64px;font-size:7.0px;color:#6d6d6d;transform:scaleX(0.8037);transform-origin:0 0">30.05.2008 15:37</div>
<div class="t" style="left:360.00px;top:277.64px;font-size:7.0px;color:#6d6d6d;transform:scaleX(0.8524);transform-origin:0 0">CAB-файл</div>
<div class="t" style="left:441.46px;top:277.64px;font-size:7.0px;color:#6d6d6d;transform:scaleX(0.8060);transform-origin:0 0">48 КБ</div>
<div class="ic" style="left:150px;top:288.03px;width:6.2px;height:8.2px;background:#bcc3cc;border:0.5px solid #9ca4ae"><div style="position:absolute;left:0.4px;top:0.9px;width:4.9px;height:2.4px;background:#e3c05a"></div><div style="position:absolute;left:0.4px;top:4.3px;width:4.9px;height:0.8px;background:#dfe4ea"></div><div style="position:absolute;left:0.4px;top:6.4px;width:4.9px;height:0.6px;background:#d6dce3"></div></div>
<div class="t" style="left:160.00px;top:288.58px;font-size:7.0px;color:#000;transform:scaleX(0.8110);transform-origin:0 0">dxnt</div>
<div class="t" style="left:285.00px;top:288.58px;font-size:7.0px;color:#6d6d6d;transform:scaleX(0.8037);transform-origin:0 0">30.05.2008 15:36</div>
<div class="t" style="left:360.00px;top:288.58px;font-size:7.0px;color:#6d6d6d;transform:scaleX(0.8524);transform-origin:0 0">CAB-файл</div>
<div class="t" style="left:430.48px;top:288.58px;font-size:7.0px;color:#6d6d6d;transform:scaleX(0.8060);transform-origin:0 0">12 952 КБ</div>
<div class="a" style="left:147.5px;top:297.75px;width:485.5px;height:10.7px;background:#d9d9d9"></div>
<div class="ic" style="left:149px;top:298.47px;width:8.5px;height:8.5px"><div style="position:absolute;left:2.5px;top:0.3px;width:4.5px;height:3.8px;background:#1f5fd0;border:0.5px solid #333"></div><div style="position:absolute;left:0;top:4.3px;width:7px;height:3.2px;background:#2a3a8a"></div><div style="position:absolute;left:0.8px;top:4.8px;width:2.5px;height:2px;background:#d8e4f4"></div><div style="position:absolute;left:5px;top:4.6px;width:3.3px;height:3.4px;background:#e8b818;border-radius:1px"></div></div>
<div class="t" style="left:160.00px;top:299.52px;font-size:7.0px;color:#000;transform:scaleX(0.8110);transform-origin:0 0">DXSETUP</div>
<div class="t" style="left:285.00px;top:299.52px;font-size:7.0px;color:#6d6d6d;transform:scaleX(0.8037);transform-origin:0 0">30.05.2008 15:34</div>
<div class="t" style="left:360.00px;top:299.52px;font-size:7.0px;color:#6d6d6d;transform:scaleX(0.9011);transform-origin:0 0">Приложение</div>
<div class="t" style="left:438.33px;top:299.52px;font-size:7.0px;color:#6d6d6d;transform:scaleX(0.8060);transform-origin:0 0">516 КБ</div>
<div class="ic" style="left:150px;top:309.91px;width:6.2px;height:8.2px;background:#bcc3cc;border:0.5px solid #9ca4ae"><div style="position:absolute;left:0.4px;top:0.9px;width:4.9px;height:2.4px;background:#e3c05a"></div><div style="position:absolute;left:0.4px;top:4.3px;width:4.9px;height:0.8px;background:#dfe4ea"></div><div style="position:absolute;left:0.4px;top:6.4px;width:4.9px;height:0.6px;background:#d6dce3"></div></div>
<div class="t" style="left:160.00px;top:310.46px;font-size:7.0px;color:#000;transform:scaleX(0.8110);transform-origin:0 0">dxupdate</div>
<div class="t" style="left:285.00px;top:310.46px;font-size:7.0px;color:#6d6d6d;transform:scaleX(0.8037);transform-origin:0 0">30.05.2008 15:37</div>
<div class="t" style="left:360.00px;top:310.46px;font-size:7.0px;color:#6d6d6d;transform:scaleX(0.8524);transform-origin:0 0">CAB-файл</div>
<div class="t" style="left:441.46px;top:310.46px;font-size:7.0px;color:#6d6d6d;transform:scaleX(0.8060);transform-origin:0 0">97 КБ</div>
<div class="ic" style="left:150px;top:320.85px;width:6.2px;height:8.2px;background:#bcc3cc;border:0.5px solid #9ca4ae"><div style="position:absolute;left:0.4px;top:0.9px;width:4.9px;height:2.4px;background:#e3c05a"></div><div style="position:absolute;left:0.4px;top:4.3px;width:4.9px;height:0.8px;background:#dfe4ea"></div><div style="position:absolute;left:0.4px;top:6.4px;width:4.9px;height:0.6px;background:#d6dce3"></div></div>
<div class="t" style="left:160.00px;top:321.40px;font-size:7.0px;color:#000;transform:scaleX(0.8110);transform-origin:0 0">Feb2005_d3dx9_24_x64</div>
<div class="t" style="left:285.00px;top:321.40px;font-size:7.0px;color:#6d6d6d;transform:scaleX(0.8037);transform-origin:0 0">30.05.2008 15:35</div>
<div class="t" style="left:360.00px;top:321.40px;font-size:7.0px;color:#6d6d6d;transform:scaleX(0.8524);transform-origin:0 0">CAB-файл</div>
<div class="t" style="left:433.62px;top:321.40px;font-size:7.0px;color:#6d6d6d;transform:scaleX(0.8060);transform-origin:0 0">1 228 КБ</div>
<div class="ic" style="left:150px;top:331.79px;width:6.2px;height:8.2px;background:#bcc3cc;border:0.5px solid #9ca4ae"><div style="position:absolute;left:0.4px;top:0.9px;width:4.9px;height:2.4px;background:#e3c05a"></div><div style="position:absolute;left:0.4px;top:4.3px;width:4.9px;height:0.8px;background:#dfe4ea"></div><div style="position:absolute;left:0.4px;top:6.4px;width:4.9px;height:0.6px;background:#d6dce3"></div></div>
<div class="t" style="left:160.00px;top:332.34px;font-size:7.0px;color:#000;transform:scaleX(0.8110);transform-origin:0 0">Feb2005_d3dx9_24_x86</div>
<div class="t" style="left:285.00px;top:332.34px;font-size:7.0px;color:#6d6d6d;transform:scaleX(0.8037);transform-origin:0 0">30.05.2008 15:38</div>
<div class="t" style="left:360.00px;top:332.34px;font-size:7.0px;color:#6d6d6d;transform:scaleX(0.8524);transform-origin:0 0">CAB-файл</div>
<div class="t" style="left:438.33px;top:332.34px;font-size:7.0px;color:#6d6d6d;transform:scaleX(0.8060);transform-origin:0 0">994 КБ</div>
<div class="ic" style="left:150px;top:342.73px;width:6.2px;height:8.2px;background:#bcc3cc;border:0.5px solid #9ca4ae"><div style="position:absolute;left:0.4px;top:0.9px;width:4.9px;height:2.4px;background:#e3c05a"></div><div style="position:absolute;left:0.4px;top:4.3px;width:4.9px;height:0.8px;background:#dfe4ea"></div><div style="position:absolute;left:0.4px;top:6.4px;width:4.9px;height:0.6px;background:#d6dce3"></div></div>
<div class="t" style="left:160.00px;top:343.28px;font-size:7.0px;color:#000;transform:scaleX(0.8110);transform-origin:0 0">Feb2006_d3dx9_29_x64</div>
<div class="t" style="left:285.00px;top:343.28px;font-size:7.0px;color:#6d6d6d;transform:scaleX(0.8037);transform-origin:0 0">30.05.2008 15:35</div>
<div class="t" style="left:360.00px;top:343.28px;font-size:7.0px;color:#6d6d6d;transform:scaleX(0.8524);transform-origin:0 0">CAB-файл</div>
<div class="t" style="left:433.62px;top:343.28px;font-size:7.0px;color:#6d6d6d;transform:scaleX(0.8060);transform-origin:0 0">1 335 КБ</div>
<div class="a" style="left:633px;top:84px;width:8.5px;height:271px;background:#f0f0f0"></div>
<svg class="a" style="left:634.5px;top:88px" width="5" height="4" viewBox="0 0 5 4"><path d="M0.5 3L2.5 1L4.5 3" fill="none" stroke="#404040" stroke-width="1"/></svg>
<div class="a" style="left:633.5px;top:160px;width:7.5px;height:57.5px;background:#cdcdcd"></div>
<div class="t" style="left:64.00px;top:356.45px;font-size:6.8px;color:#3a3a3a;transform:scaleX(0.8730);transform-origin:0 0">Элементов: 98</div>
<div class="a" style="left:110px;top:354px;width:0.5px;height:9px;background:#f3f3f3"></div>
<div class="t" style="left:115.50px;top:356.45px;font-size:6.8px;color:#3a3a3a;transform:scaleX(0.8786);transform-origin:0 0">Выбран 1 элемент: 516 КБ</div>
<div class="a" style="left:194.5px;top:354px;width:0.5px;height:9px;background:#f3f3f3"></div>
<div class="a" style="left:444.8px;top:242.5px;width:226.8px;height:152.5px;background:#f0f0f0;border:0.7px solid #8a8a8a;box-shadow:0 2px 9px rgba(0,0,0,0.3)"></div>
<div class="a" style="left:445.5px;top:243.2px;width:225.4px;height:15.6px;background:#fff"></div>
<div class="a" style="left:449.5px;top:246px;width:8px;height:8.5px">
<div style="position:absolute;left:2px;top:0;width:4px;height:3.5px;background:#e04020"></div>
<div style="position:absolute;left:0;top:3.5px;width:8px;height:5px;background:#2a4a90"></div>
<div style="position:absolute;left:1px;top:4.5px;width:2.5px;height:2.5px;background:#a0c0f0"></div>
<div style="position:absolute;left:4.5px;top:4.5px;width:2.5px;height:2.5px;background:#a0c0f0"></div>
</div>
<div class="t" style="left:460.50px;top:247.85px;font-size:6.8px;color:#1a1a1a;transform:scaleX(0.8970);transform-origin:0 0;-webkit-text-stroke:0.04px">SendLogClient</div>
<svg class="a" style="left:659.5px;top:246.5px" width="8" height="8" viewBox="0 0 8 8"><path d="M1 1L7 7M7 1L1 7" stroke="#333" stroke-width="0.7"/></svg>
<div class="t" style="left:457.50px;top:268.15px;font-size:6.2px;color:#1a1a1a;transform:scaleX(0.9067);transform-origin:0 0;-webkit-text-stroke:0.04px">Log file you send us will be a great help on improving the client.</div>
<div class="a" style="left:623px;top:266.4px;width:39.5px;height:13.2px;background:#f0f0f0;border-top:0.8px solid #fff;border-left:0.8px solid #fff;border-right:1px solid #696969;border-bottom:1px solid #696969;box-shadow:inset -0.6px -0.6px 0 #a0a0a0,0 0 0 0.4px #505050"></div>
<div class="t" style="left:635.95px;top:270.40px;font-size:6.3px;color:#1a1a1a;transform:scaleX(0.9172);transform-origin:0 0;-webkit-text-stroke:0.04px">Send</div>
<div class="a" style="left:623px;top:282.0px;width:39.5px;height:13.2px;background:#f0f0f0;border-top:0.8px solid #fff;border-left:0.8px solid #fff;border-right:1px solid #696969;border-bottom:1px solid #696969;box-shadow:inset -0.6px -0.6px 0 #a0a0a0"></div>
<div class="t" style="left:633.95px;top:286.00px;font-size:6.3px;color:#1a1a1a;transform:scaleX(0.8924);transform-origin:0 0;-webkit-text-stroke:0.04px">Cancel</div>
<div class="a" style="left:623px;top:297.8px;width:39.5px;height:13.2px;background:#f0f0f0;border-top:0.8px solid #fff;border-left:0.8px solid #fff;border-right:1px solid #696969;border-bottom:1px solid #696969;box-shadow:inset -0.6px -0.6px 0 #a0a0a0"></div>
<div class="t" style="left:629.20px;top:301.80px;font-size:6.3px;color:#1a1a1a;transform:scaleX(0.9948);transform-origin:0 0;-webkit-text-stroke:0.04px">Detail&gt;&gt;&gt;</div>
<div class="a" style="left:451px;top:313.2px;width:216px;height:0.8px;background:#a0a0a0"></div>
<div class="a" style="left:451px;top:314px;width:216px;height:0.8px;background:#fff"></div>
<div class="a" style="left:451px;top:318.2px;width:216px;height:67.3px;background:#fff;border-top:0.8px solid #8c8c8c;border-left:0.8px solid #8c8c8c;border-right:0.6px solid #e3e3e3;border-bottom:0.6px solid #e3e3e3"></div>
<div class="a" style="left:452.5px;top:319.2px;width:204.5px;height:57px;overflow:hidden">
<div class="a" style="left:0.8px;top:0.5px;width:204px;height:47.3px;background:#0078d7"></div>
<div class="t" style="left:0.80px;top:1.65px;font-size:5.8px;color:#fff;-webkit-text-stroke:0">C:\Windows\System32\GDI32.dll, loaded at 0x76fe0000 - 133736 bytes - 575ad0cbe</div>
<div class="t" style="left:0.80px;top:8.42px;font-size:5.8px;color:#fff;-webkit-text-stroke:0">C:\Windows\System32\KERNEL32.DLL, loaded at 0x77010000 - 644960 bytes - 3b1d</div>
<div class="t" style="left:0.80px;top:15.19px;font-size:5.8px;color:#fff;-webkit-text-stroke:0">C:\Windows\System32\ADVAPI32.dll, loaded at 0x77220000 - 487240 bytes - 1d0c4</div>
<div class="t" style="left:0.80px;top:21.96px;font-size:5.8px;color:#fff;-webkit-text-stroke:0">C:\Windows\System32\IMM32.DLL, loaded at 0x772a0000 - 147912 bytes - f1cc3</div>
<div class="t" style="left:0.80px;top:28.73px;font-size:5.8px;color:#fff;-webkit-text-stroke:0">C:\Windows\SYSTEM32\ntdll.dll, loaded at 0x772d0000 - 1673704 bytes - 5d078</div>
<div class="t" style="left:0.80px;top:35.50px;font-size:5.8px;color:#fff;-webkit-text-stroke:0">C:\Windows\SYSTEM32\AcLayers.DLL, loaded at 0x7abe0000 - 378880 bytes - d3e1</div>
<div class="t" style="left:0.80px;top:42.27px;font-size:5.8px;color:#fff;-webkit-text-stroke:0">C:\EuroAion\bin32\clmods.dll, loaded at 0x7c360000 - 4404560 bytes - 5eecbbef</div>
<div class="a" style="left:1px;top:48.5px;width:0.5px;height:6.5px;background:#555"></div>
</div>
<div class="a" style="left:657px;top:319.2px;width:9.5px;height:57px;background:#f0f0f0"></div>
<svg class="a" style="left:659.5px;top:321.5px" width="5" height="4" viewBox="0 0 5 4"><path d="M0.5 3L2.5 1L4.5 3" fill="none" stroke="#606060" stroke-width="0.8"/></svg>
<div class="a" style="left:658px;top:359.6px;width:7.5px;height:7.5px;background:#cdcdcd"></div>
<svg class="a" style="left:659.5px;top:369.5px" width="5" height="4" viewBox="0 0 5 4"><path d="M0.5 1L2.5 3L4.5 1" fill="none" stroke="#606060" stroke-width="0.8"/></svg>
<div class="a" style="left:452px;top:376.2px;width:214.5px;height:8.8px;background:#f0f0f0"></div>
<svg class="a" style="left:454px;top:378.5px" width="4" height="5" viewBox="0 0 4 5"><path d="M3 0.5L1 2.5L3 4.5" fill="none" stroke="#606060" stroke-width="0.8"/></svg>
<div class="a" style="left:460.2px;top:377px;width:14.7px;height:7.3px;background:#cdcdcd"></div>
<svg class="a" style="left:652px;top:378.5px" width="4" height="5" viewBox="0 0 4 5"><path d="M1 0.5L3 2.5L1 4.5" fill="none" stroke="#606060" stroke-width="0.8"/></svg>
<div class="a" style="left:0;top:542px;width:1000px;height:21px;background:linear-gradient(90deg,rgb(36,58,68),rgb(34,54,66) 30%,rgb(30,46,62) 60%,rgb(28,42,62) 80%,rgb(26,36,60))"></div>
<svg class="a" style="left:8px;top:547.5px" width="9.5" height="9.5" viewBox="0 0 9.5 9.5"><path d="M0 1.4L4.1 0.8V4.5H0Z M4.7 0.7L9.4 0V4.5H4.7Z M0 5.1H4.1V8.7L0 8.1Z M4.7 5.1H9.4V9.5L4.7 8.8Z" fill="#fff"/></svg>
<div class="a" style="left:33.5px;top:548px;width:11.3px;height:9px;background:#f5c84a;border-radius:0.5px"></div>
<div class="a" style="left:35px;top:552px;width:8.5px;height:5px;background:#2a8ee8"></div>
<div class="a" style="left:38px;top:553px;width:2.5px;height:2px;background:#f5c84a"></div>
<div class="a" style="left:28.8px;top:562px;width:20.3px;height:1px;background:#76b9ed"></div>
<div class="a" style="left:58px;top:546px;width:13px;height:13px;border-radius:50%;background:#e52620"></div>
<div class="t" style="left:61.45px;top:548.80px;font-size:8.5px;color:#fff;font-weight:bold">Я</div>
<div class="a" style="left:77.6px;top:542px;width:24.8px;height:21px;background:#9a5c30"></div>
<div class="a" style="left:77.6px;top:562px;width:24.8px;height:1px;background:#e8642c"></div>
<div class="a" style="left:84.5px;top:548px;width:10px;height:8.5px;background:#8aa4e8;border-radius:2px"></div>
<div class="a" style="left:86.5px;top:550.5px;width:6px;height:3.5px;background:#fff;border-radius:40%"></div>
<div class="a" style="left:91px;top:553px;width:6.5px;height:6.5px;border-radius:50%;background:#e84a3a;border:0.6px solid #9a5c30"></div>
<div class="t" style="left:92.99px;top:554.50px;font-size:4.5px;color:#fff;font-weight:bold">1</div>
<div class="a" style="left:109.5px;top:546.5px;width:12px;height:12px;border-radius:50%;background:#efefef"></div>
<div class="a" style="left:115px;top:552.5px;width:1.6px;height:5px;background:#e5231b"></div>
<div class="a" style="left:113px;top:548.5px;width:1.5px;height:5px;background:#e5231b;transform:rotate(-35deg)"></div>
<div class="a" style="left:117.2px;top:548.5px;width:1.5px;height:5px;background:#e5231b;transform:rotate(35deg)"></div>
<div class="a" style="left:104.7px;top:562px;width:21.3px;height:1px;background:#76b9ed"></div>
<div class="a" style="left:128.8px;top:542px;width:24.8px;height:21px;background:#4a5864"></div>
<div class="a" style="left:128.8px;top:562px;width:24.8px;height:1px;background:#76b9ed"></div>
<div class="a" style="left:137.8px;top:546.1px;width:5.6px;height:6.6px;background:#f0c020;border-radius:0.6px"><div style="position:absolute;left:0.8px;top:0.8px;width:4px;height:4.4px;background:#e8301c"></div></div>
<div class="a" style="left:136px;top:552.3px;width:4.5px;height:6px;background:#d8d8d0;border:0.4px solid #222"></div>
<div class="a" style="left:140.5px;top:552px;width:5.5px;height:6.2px;background:#58a8e8;border:0.4px solid #223"><div style="position:absolute;left:1px;top:1.5px;width:2.5px;height:3px;background:#3050a0"></div></div>
<svg class="a" style="left:884px;top:550px" width="8" height="5" viewBox="0 0 8 5"><path d="M1 4L4 1L7 4" fill="none" stroke="#ddd" stroke-width="0.8"/></svg>
<svg class="a" style="left:896px;top:548.5px" width="10" height="9" viewBox="0 0 10 9"><rect x="1.5" y="1" width="8" height="5" fill="none" stroke="#ddd" stroke-width="0.8"/><path d="M3 6V8.5M1 8.5H5" stroke="#ddd" stroke-width="0.8"/><path d="M0.5 1V4" stroke="#ddd" stroke-width="0.8"/></svg>
<svg class="a" style="left:908px;top:548.5px" width="10" height="9" viewBox="0 0 10 9"><path d="M1 3H3L5.5 1V8L3 6H1Z" fill="none" stroke="#ddd" stroke-width="0.7"/><path d="M6.8 3Q7.6 4.5 6.8 6M8.3 2Q9.6 4.5 8.3 7" fill="none" stroke="#ddd" stroke-width="0.6"/></svg>
<div class="t" style="left:922.70px;top:549.95px;font-size:6.2px;color:#eee;letter-spacing:-0.230px">РУС</div>
<div class="t" style="left:948.05px;top:545.35px;font-size:6.2px;color:#eee;letter-spacing:-0.237px">14:35</div>
<div class="t" style="left:941.50px;top:554.15px;font-size:6.2px;color:#eee;letter-spacing:-0.297px">15.07.2020</div>
<svg class="a" style="left:977.5px;top:548px" width="10" height="10" viewBox="0 0 10 10"><path d="M0.8 0.8H9.2V7H6.2L4.8 8.8L3.8 7H0.8Z" fill="none" stroke="#ddd" stroke-width="0.8"/></svg>
<div class="a" style="left:996.5px;top:542px;width:0.6px;height:21px;background:#555c68"></div>
</body></html>
